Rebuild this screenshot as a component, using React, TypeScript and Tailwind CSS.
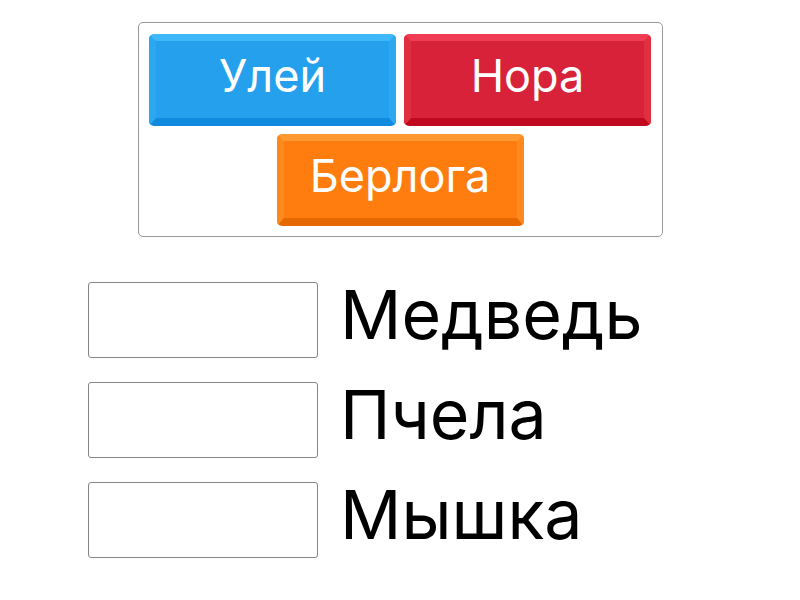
import React from 'react'

interface TileProps {
  label: string;
  colors: string;
}

const Tile = ({ label, colors }: TileProps) => {
  return (
    <div
      className={`flex h-[92px] w-[247px] items-center justify-center rounded-[5px] border-x-[7px] border-t-[7px] border-b-[8px] text-[45px] leading-none text-white ${colors}`}
    >
      <span className="-mt-[8px]">{label}</span>
    </div>
  )
}

const AnswerRow = ({ word }: { word: string }) => {
  return (
    <div className="flex h-[75px] items-center gap-[22px]">
      <div className="h-[76px] w-[230px] rounded-[3px] border border-[#858585] bg-white" />
      <p className="-mt-[12px] text-[68px] leading-none text-black">{word}</p>
    </div>
  )
}

export default function App() {
  return (
    <div className="h-[600px] w-[800px] bg-white font-['Inter','Noto_Sans',sans-serif]">
      <div className="flex justify-center pt-[22px]">
        <div className="flex w-[525px] flex-wrap justify-center gap-[8px] rounded-[5px] border border-[#9a9a9a] px-[10px] pt-[11px] pb-[10px]">
          <Tile
            label="Улей"
            colors="bg-[#25a0ec] border-t-[#3fb8f7] border-x-[#2ca8f1] border-b-[#108adf]"
          />
          <Tile
            label="Нора"
            colors="bg-[#d8223a] border-t-[#ef3d54] border-x-[#e0303f] border-b-[#c0081f]"
          />
          <Tile
            label="Берлога"
            colors="bg-[#fe7d0e] border-t-[#ff9a32] border-x-[#fd8a1e] border-b-[#e66900]"
          />
        </div>
      </div>

      <div className="flex flex-col gap-[25px] pl-[88px] pt-[45px]">
        <AnswerRow word="Медведь" />
        <AnswerRow word="Пчела" />
        <AnswerRow word="Мышка" />
      </div>
    </div>
  )
}
